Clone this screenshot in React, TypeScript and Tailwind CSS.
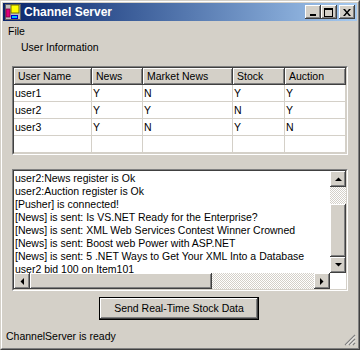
import React from 'react'

const raised = 'shadow-[inset_-1px_-1px_#404040,inset_1px_1px_#ffffff,inset_-2px_-2px_#808080]'

const users = [
  { n: 'user1', news: 'Y', market: 'N', stock: 'Y', auction: 'Y' },
  { n: 'user2', news: 'Y', market: 'Y', stock: 'N', auction: 'Y' },
  { n: 'user3', news: 'Y', market: 'N', stock: 'Y', auction: 'N' },
  { n: '', news: '', market: '', stock: '', auction: '' },
]

const log = [
  'user2:News register is Ok',
  'user2:Auction register is Ok',
  '[Pusher] is connected!',
  '[News] is sent: Is VS.NET Ready for the Enterprise?',
  '[News] is sent: XML Web Services Contest Winner Crowned',
  '[News] is sent: Boost web Power with ASP.NET',
  '[News] is sent: 5 .NET Ways to Get Your XML Into a Database',
  'user2 bid 100 on Item101',
]

function AppIcon() {
  return (
    <svg width="16" height="16" viewBox="0 0 16 16" className="shrink-0">
      <rect x="0" y="0" width="16" height="16" fill="#c0c0c0" />
      <rect x="0.5" y="0.5" width="15" height="15" fill="none" stroke="#606060" />
      <rect x="1" y="5" width="4" height="8" fill="#e0007a" stroke="#800040" strokeWidth="0.8" />
      <rect x="6" y="1" width="8" height="8" fill="#ffff00" stroke="#707000" strokeWidth="1" />
      <rect x="6" y="11" width="7" height="4" fill="#0000d0" />
      <rect x="7" y="12" width="5" height="2" fill="#00c0ff" />
    </svg>
  )
}

function CapButton({ children, className = '' }: { children: React.ReactNode; className?: string }) {
  return (
    <div className={`w-[16px] h-[14px] bg-[#d4d0c8] flex items-center justify-center ${raised} ${className}`}>
      {children}
    </div>
  )
}

function Arrow({ dir }: { dir: 'up' | 'down' | 'left' | 'right' }) {
  const pts = {
    up: '0,4 7,4 3.5,0.5',
    down: '0,0 7,0 3.5,3.5',
    left: '4,0 4,7 0.5,3.5',
    right: '0,0 0,7 3.5,3.5',
  }[dir]
  const w = dir === 'up' || dir === 'down' ? 7 : 4
  const h = dir === 'up' || dir === 'down' ? 4 : 7
  return (
    <div className={`w-[16px] h-[16px] shrink-0 bg-[#d4d0c8] flex items-center justify-center ${raised}`}>
      <svg width={w} height={h} viewBox={`0 0 ${w} ${h}`}>
        <polygon points={pts} fill="#000" />
      </svg>
    </div>
  )
}

const checker = 'bg-[repeating-conic-gradient(#d4d0c8_0_25%,#ffffff_0_50%)] bg-[length:2px_2px]'

export default function App() {
  return (
    <div className="w-[360px] h-[350px] bg-[#d4d0c8] font-['Liberation_Sans',Arial,sans-serif] text-[10.5px] text-black border border-t-[#d4d0c8] border-l-[#d4d0c8] border-r-[#404040] border-b-[#404040]">
      <div className="w-full h-full border border-t-white border-l-white border-r-[#808080] border-b-[#808080] p-[1px] flex flex-col">
        {/* title bar */}
        <div className="h-[18px] shrink-0 flex items-center bg-gradient-to-r from-[#0a246a] to-[#a6caf0] pl-[2px] pr-[2px]">
          <AppIcon />
          <span className="ml-[3px] text-white font-bold text-[12px] leading-[18px]">Channel Server</span>
          <div className="ml-auto flex items-center">
            <CapButton>
              <div className="w-[6px] h-[2px] bg-black mt-[6px] -ml-[1px]" />
            </CapButton>
            <CapButton>
              <div className="w-[9px] h-[9px] border border-black border-t-2 -ml-[1px]" />
            </CapButton>
            <CapButton className="ml-[2px]">
              <svg width="8" height="7" viewBox="0 0 8 7" className="-ml-[1px]">
                <path d="M0 0h2l2 2.5L6 0h2L5 3.5 8 7H6L4 4.5 2 7H0l3-3.5z" fill="#000" />
              </svg>
            </CapButton>
          </div>
        </div>

        {/* menu */}
        <div className="h-[18px] shrink-0 pt-[4px] pl-[5px] leading-[13px]">File</div>
        <div className="mt-[2px] h-[13px] leading-[13px] ml-[18px]">User Information</div>

        {/* list view */}
        <div className="mt-[12px] ml-[9px] w-[336px] h-[89px] shrink-0 border border-t-[#808080] border-l-[#808080] border-r-white border-b-white">
          <div className="w-full h-full border border-t-[#404040] border-l-[#404040] border-r-[#d4d0c8] border-b-[#d4d0c8] bg-white">
            <div className="grid grid-cols-[78px_51px_90px_52px_61px] h-[17px] bg-[#d4d0c8]">
              {['User Name', 'News', 'Market News', 'Stock', 'Auction'].map(h => (
                <div key={h} className={`pl-[4px] leading-[16px] ${raised}`}>{h}</div>
              ))}
            </div>
            {users.map((u, i) => (
              <div key={i} className="grid grid-cols-[78px_51px_90px_52px_61px] h-[17px]">
                {[u.n, u.news, u.market, u.stock, u.auction].map((c, j) => (
                  <div key={j} className="pl-[1px] leading-[16px] border-r border-b border-[#d4d0c8]">{c}</div>
                ))}
              </div>
            ))}
          </div>
        </div>

        {/* log text box */}
        <div className="mt-[14px] ml-[9px] w-[336px] h-[122px] shrink-0 border border-t-[#808080] border-l-[#808080] border-r-white border-b-white">
          <div className="w-full h-full border border-t-[#404040] border-l-[#404040] border-r-[#d4d0c8] border-b-[#d4d0c8] bg-white flex flex-col">
            <div className="flex flex-1 min-h-0">
              <div className="flex-1 overflow-hidden pt-[1px] pl-[1px] leading-[13px] whitespace-nowrap">
                {log.map((l, i) => (
                  <div key={i}>{l}</div>
                ))}
              </div>
              <div className="w-[16px] flex flex-col">
                <Arrow dir="up" />
                <div className={`h-[17px] ${checker}`} />
                <div className={`h-[53px] bg-[#d4d0c8] ${raised}`} />
                <Arrow dir="down" />
              </div>
            </div>
            <div className="h-[16px] flex shrink-0">
              <Arrow dir="left" />
              <div className={`w-[182px] bg-[#d4d0c8] ${raised}`} />
              <div className={`flex-1 ${checker}`} />
              <Arrow dir="right" />
              <div className="w-[16px] bg-white" />
            </div>
          </div>
        </div>

        {/* button */}
        <div className="mt-[6px] ml-[96px] w-[160px] h-[23px] shrink-0 border border-black">
          <div className={`w-full h-full flex items-center justify-center bg-[#d4d0c8] ${raised}`}>
            Send Real-Time Stock Data
          </div>
        </div>

        {/* status bar */}
        <div className="mt-[4px] h-[23px] shrink-0 flex items-start pl-[3px] pt-[6px] leading-[13px] relative">
          <span>ChannelServer is ready</span>
          <svg width="12" height="12" viewBox="0 0 12 12" className="absolute right-[1px] bottom-[1px]">
            <path d="M11 1L1 11M11 5L5 11M11 9L9 11" stroke="#808080" strokeWidth="1.2" />
            <path d="M11 2.5L2.5 11M11 6.5L6.5 11M11 10.5L10.5 11" stroke="#ffffff" strokeWidth="0.8" />
          </svg>
        </div>
      </div>
    </div>
  )
}
